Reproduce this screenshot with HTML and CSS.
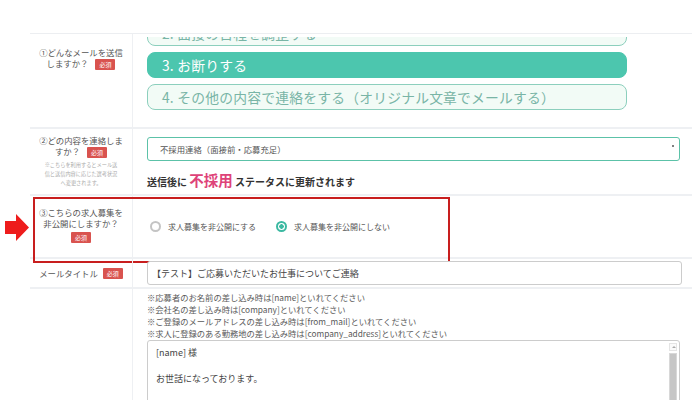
FILE: index.html
```html
<!DOCTYPE html>
<html lang="ja">
<head>
    <meta charset="UTF-8">
    <meta name="viewport" content="width=device-width, initial-scale=1.0">
    <title>メール送信</title>
    <link rel="stylesheet" href="styles.css">
</head>
<body>
    <div class="form-table">
        <!-- Q1 -->
        <div class="row row-type">
            <div class="label">①どんなメールを送信<br>しますか？ <span class="req">必須</span></div>
            <div class="field">
                <div class="choices">
                    <button class="choice">2. 面接の日程を調整する</button>
                    <button class="choice active">3. お断りする</button>
                    <button class="choice">4. その他の内容で連絡をする（オリジナル文章でメールする）</button>
                </div>
            </div>
        </div>

        <!-- Q2 -->
        <div class="row row-content">
            <div class="label">
                ②どの内容を連絡しま<br>すか？ <span class="req">必須</span>
                <p class="note">※こちらを利用するとメール送<br>信と送信内容に応じた選考状況<br>へ変更されます。</p>
            </div>
            <div class="field">
                <div class="select-wrap">
                    <select>
                        <option>不採用連絡（面接前・応募充足）</option>
                    </select>
                </div>
                <p class="status">送信後に <span class="status-name">不採用</span> ステータスに更新されます</p>
            </div>
        </div>

        <!-- Q3 -->
        <div class="row row-close highlight">
            <div class="label">③こちらの求人募集を<br>非公開にしますか？<br><span class="req">必須</span></div>
            <div class="field radios">
                <label class="radio"><input type="radio" name="close"><span class="dot"></span>求人募集を非公開にする</label>
                <label class="radio"><input type="radio" name="close" checked><span class="dot"></span>求人募集を非公開にしない</label>
            </div>
        </div>

        <!-- Title -->
        <div class="row row-title">
            <div class="label">メールタイトル <span class="req">必須</span></div>
            <div class="field">
                <input type="text" class="text-input" value="【テスト】ご応募いただいたお仕事についてご連絡">
            </div>
        </div>

        <!-- Body -->
        <div class="row row-body">
            <div class="label"></div>
            <div class="field">
                <ul class="hints">
                    <li>※応募者のお名前の差し込み時は[name]といれてください</li>
                    <li>※会社名の差し込み時は[company]といれてください</li>
                    <li>※ご登録のメールアドレスの差し込み時は[from_mail]といれてください</li>
                    <li>※求人に登録のある勤務地の差し込み時は[company_address]といれてください</li>
                </ul>
                <div class="textarea-wrap">
                    <textarea class="body-input">[name] 様

お世話になっております。


[company]の採用担当です。
この度はご応募いただき誠にありがとうございました。</textarea>
                    <div class="scrollbar">
                        <span class="scroll-up"></span>
                        <span class="scroll-thumb"></span>
                    </div>
                </div>
            </div>
        </div>
    </div>

    <svg class="arrow" width="24" height="27" viewBox="0 0 24 27">
        <path d="M0 7 H11 V0 L24 13.5 L11 27 V20 H0 Z" fill="#ee1c1c"/>
    </svg>
</body>
</html>
```

FILE: styles.css
```css
* {
    box-sizing: border-box;
    margin: 0;
    padding: 0;
}

body {
    font-family: "Noto Sans CJK JP", "Noto Sans", sans-serif;
    background: #ffffff;
    color: #555;
    padding: 33px 0 0 30px;
    width: 692px;
    height: 400px;
    overflow: hidden;
    position: relative;
}

.form-table {
    border-top: 1px solid #eceef1;
}

.row {
    display: flex;
    border-bottom: 2px solid #eef0f3;
    position: relative;
}

.label {
    width: 103px;
    flex-shrink: 0;
    border-right: 1px solid #eef0f3;
    text-align: center;
    font-size: 8.4px;
    line-height: 11px;
    color: #555;
    padding: 0 4px;
}

.req {
    display: inline-block;
    background: #d9534f;
    color: #fff;
    font-size: 6px;
    line-height: 11px;
    padding: 0 4px;
    border-radius: 1px;
    margin-left: 5px;
    vertical-align: middle;
}

.field {
    flex: 1;
    padding: 0 12px 0 14px;
}

/* Q1 */
.row-type {
    height: 95px;
}

.row-type .label {
    padding-top: 13px;
}

.row-type .field {
    overflow: hidden;
    clip-path: inset(3px 0 0 0);
}

.choices {
    display: flex;
    flex-direction: column;
    gap: 6px;
    margin-top: -14px;
}

.choice {
    width: 480px;
    height: 26px;
    border: 1.5px solid #8ccfbd;
    background: #f2fbf6;
    border-radius: 8px;
    text-align: left;
    padding-left: 14px;
    font-family: inherit;
    font-size: 13.8px;
    color: #79b5a6;
    letter-spacing: 0.2px;
}

.choice.active {
    background: #4cc6ae;
    border-color: #4cc6ae;
    color: #fff;
}

/* Q2 */
.row-content {
    height: 67px;
}

.row-content .label {
    padding-top: 6px;
}

.note {
    font-size: 5.2px;
    line-height: 9px;
    color: #aaa;
    margin-top: 2px;
}

.row-content .field {
    padding-top: 5px;
}

.select-wrap {
    position: relative;
}

.select-wrap::after {
    content: "";
    position: absolute;
    right: 6px;
    top: 11px;
    width: 2px;
    height: 2px;
    background: #555;
    border-radius: 1px;
}

select {
    appearance: none;
    width: 100%;
    height: 24px;
    border: 1px solid #5cc2a8;
    border-radius: 3px;
    background: #fff;
    padding-left: 12px;
    font-family: inherit;
    font-size: 8.4px;
    color: #555;
}

.status {
    font-size: 10px;
    font-weight: bold;
    color: #333;
    margin-top: 8px;
}

.status-name {
    font-size: 14.5px;
    color: #de4379;
}

/* Q3 */
.row-close {
    height: 63px;
}

.row-close .label {
    display: flex;
    flex-direction: column;
    justify-content: center;
    align-items: center;
    padding-bottom: 4px;
}

.row-close .label .req {
    margin: 3px 0 0;
}

.highlight::after {
    content: "";
    position: absolute;
    left: 3px;
    top: 1px;
    width: 413px;
    height: 62px;
    border: 2px solid #c81e1e;
    pointer-events: none;
}

.radios {
    display: flex;
    align-items: center;
    gap: 20px;
    padding-left: 17px;
}

.radio {
    display: flex;
    align-items: center;
    font-size: 8px;
    color: #555;
}

.radio input {
    display: none;
}

.dot {
    width: 11px;
    height: 11px;
    border: 2px solid #c4c4c4;
    border-radius: 50%;
    margin-right: 7px;
}

.radio input:checked + .dot {
    border: 2px solid #3cb9a2;
    background: radial-gradient(circle, #3cb9a2 0 2px, #fff 2.5px);
}

/* title */
.row-title {
    height: 30px;
}

.row-title .label,
.row-title .field {
    display: flex;
    align-items: center;
}

.row-title .label {
    justify-content: center;
}

.row-title .field {
    padding-right: 10px;
}

.text-input {
    width: 100%;
    height: 24px;
    border: 1px solid #ccc;
    border-radius: 3px;
    padding-left: 4px;
    font-family: inherit;
    font-size: 9px;
    color: #444;
}

/* body */
.row-body {
    height: 120px;
    border-bottom: none;
}

.hints {
    list-style: none;
    font-size: 8.3px;
    line-height: 12px;
    color: #5a5a5a;
    padding-top: 2px;
}

.textarea-wrap {
    position: relative;
    width: 533px;
    margin-top: 1px;
}

.body-input {
    display: block;
    width: 100%;
    height: 90px;
    border: 1px solid #ccc;
    border-radius: 3px;
    padding: 5px 20px 5px 8px;
    font-family: inherit;
    font-size: 9px;
    line-height: 13px;
    color: #444;
    resize: none;
    overflow: hidden;
}

.scrollbar {
    position: absolute;
    top: 2px;
    right: 2px;
    bottom: 2px;
    width: 10px;
    display: flex;
    flex-direction: column;
    gap: 2px;
    padding: 1px;
}

.scroll-up {
    height: 8px;
    border: 1px solid #e4e4e4;
    background: #fafafa;
    position: relative;
}

.scroll-up::after {
    content: "";
    position: absolute;
    left: 2px;
    top: 2px;
    border-left: 2px solid transparent;
    border-right: 2px solid transparent;
    border-bottom: 2px solid #aaa;
}

.scroll-thumb {
    flex: 1;
    background: #c6c6c6;
    border: 1px solid #d8d8d8;
}

.arrow {
    position: absolute;
    left: 5px;
    top: 214px;
}
```
